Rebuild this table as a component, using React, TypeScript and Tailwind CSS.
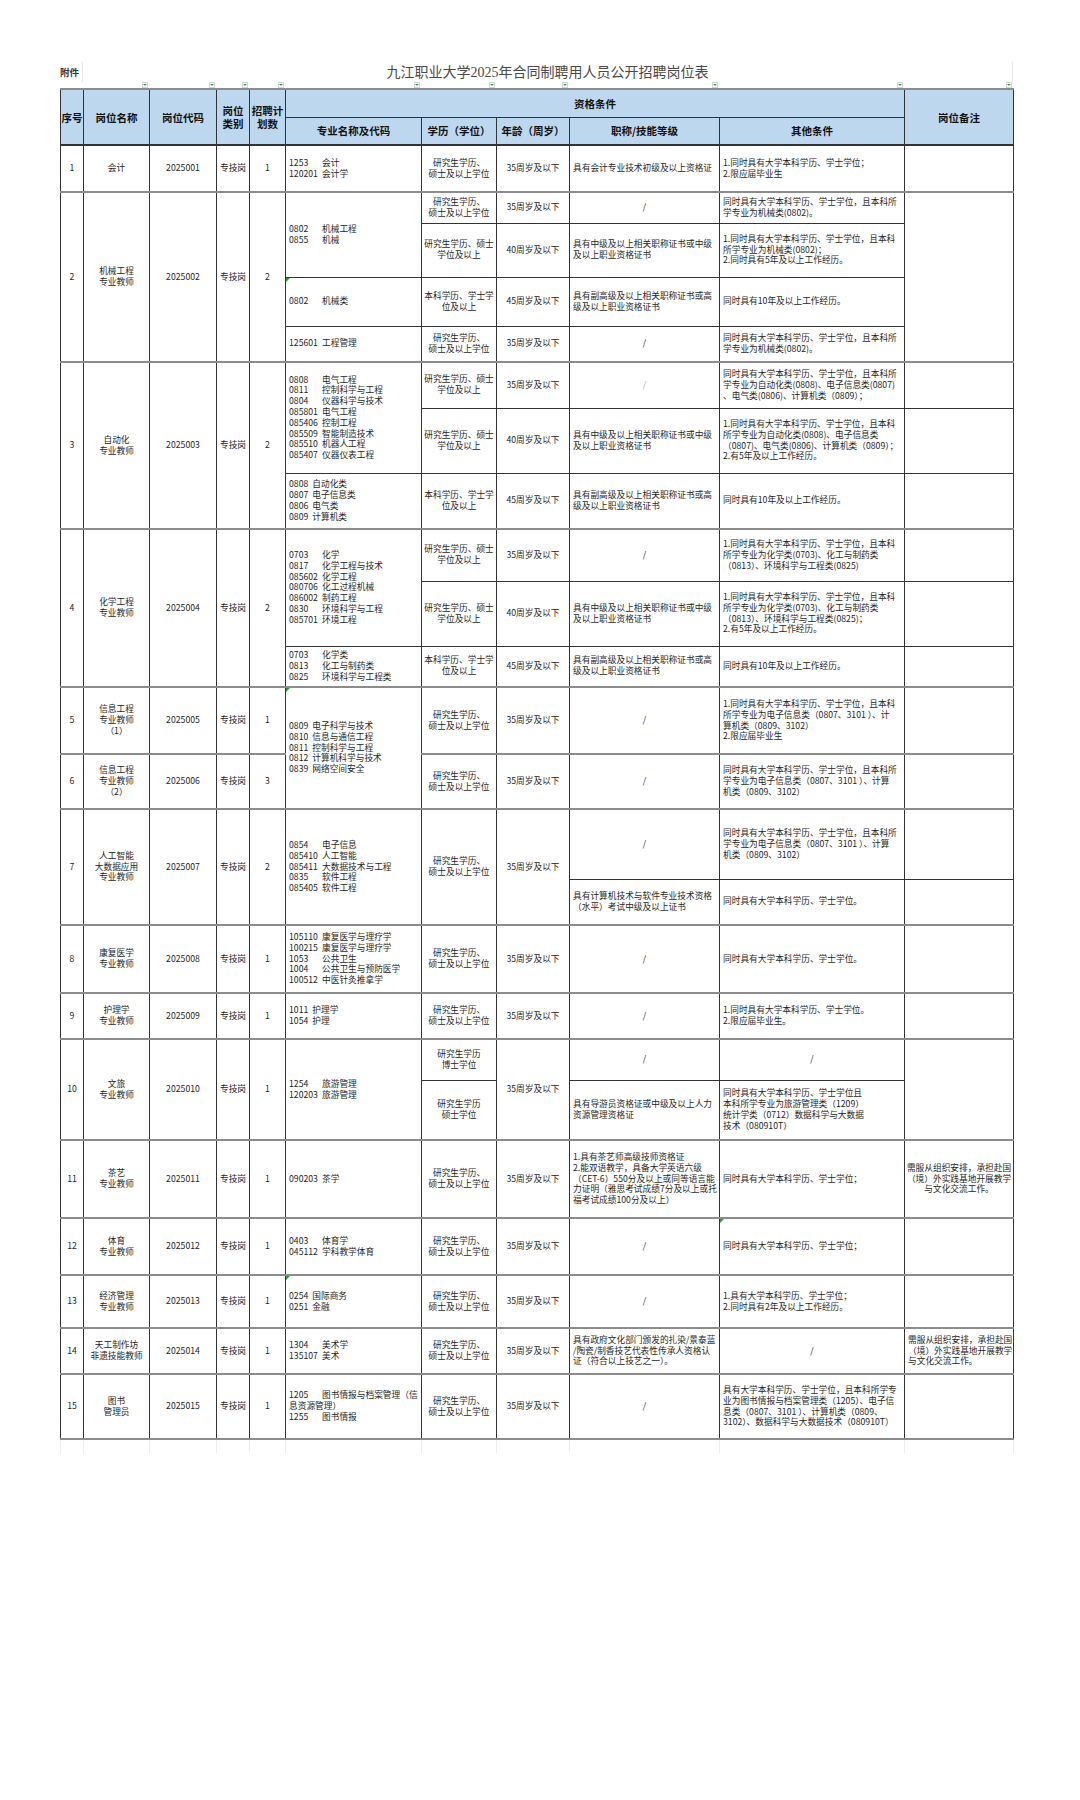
import clsx from "clsx";
import type { ReactNode } from "react";

const COLS = [23, 66, 67, 33, 36, 136, 75, 73, 150, 185, 109];

const EDU_A = ["研究生学历、", "硕士及以上学位"];
const EDU_B = ["研究生学历、硕士", "学位及以上"];
const EDU_C = ["本科学历、学士学", "位及以上"];
const MID = ["具有中级及以上相关职称证书或中级", "及以上职业资格证书"];
const HIGH = ["具有副高级及以上相关职称证书或高", "级及以上职业资格证书"];
const TEN = ["同时具有10年及以上工作经历。"];
const MECH = ["同时具有大学本科学历、学士学位，且本科所", "学专业为机械类(0802)。"];
const INFO = [
  "同时具有大学本科学历、学士学位，且本科所",
  "学专业为电子信息类（0807、3101 ）、计算",
  "机类（0809、3102）",
];
const ABROAD = ["需服从组织安排，承担赴国", "（境）外实践基地开展教学", "与文化交流工作。"];

const rowTop = "border-t-2 border-t-[#8c8c8c]";

function Lines({ lines }: { lines: string[] }) {
  return (
    <>
      {lines.map((l, i) => (
        <div key={i} className="whitespace-nowrap">
          {l}
        </div>
      ))}
    </>
  );
}

function Major({ items, aligned }: { items: [string, string][]; aligned?: boolean }) {
  return (
    <div className="text-left">
      {items.map(([code, name], i) => (
        <div key={i} className="flex whitespace-nowrap">
          {code && <span className={aligned ? "w-[33px] shrink-0" : "mr-[4px]"}>{code}</span>}
          <span>{name}</span>
        </div>
      ))}
    </div>
  );
}

function Tick() {
  return (
    <span className="absolute left-0 top-0 h-0 w-0 border-r-[4px] border-t-[4px] border-r-transparent border-t-[#2f9a3a]" />
  );
}

function Td({
  children,
  rowSpan,
  left,
  tick,
  className,
}: {
  children?: ReactNode;
  rowSpan?: number;
  left?: boolean;
  tick?: boolean;
  className?: string;
}) {
  return (
    <td
      rowSpan={rowSpan}
      className={clsx(
        "relative whitespace-nowrap border border-[#333] py-0 align-middle",
        left ? "px-[3px] text-left" : "px-0 text-center",
        className
      )}
    >
      {tick && <Tick />}
      {children}
    </td>
  );
}

function Th({ children, rowSpan, colSpan }: { children: ReactNode; rowSpan?: number; colSpan?: number }) {
  return (
    <th
      rowSpan={rowSpan}
      colSpan={colSpan}
      className="whitespace-nowrap border border-[#333] px-0 text-center align-middle text-[10.5px] font-bold leading-[13px] text-[#111]"
    >
      {children}
    </th>
  );
}

function Marker() {
  return (
    <div className="flex h-[6px] w-[6px] items-center justify-center border border-[#d4d4d4] bg-white">
      <div className="h-0 w-0 border-x-[2px] border-t-[2px] border-x-transparent border-t-[#3f9f5f]" />
    </div>
  );
}

function Head({ no, name, code, plan, span }: { no: string; name: string[]; code: string; plan: string; span?: number }) {
  return (
    <>
      <Td rowSpan={span}>{no}</Td>
      <Td rowSpan={span}>
        <Lines lines={name} />
      </Td>
      <Td rowSpan={span}>{code}</Td>
      <Td rowSpan={span}>专技岗</Td>
      <Td rowSpan={span}>{plan}</Td>
    </>
  );
}

export default function App() {
  return (
    <div className="min-h-[1800px] w-[1080px] bg-white pl-[60px] pt-[62px] font-['Noto_Sans_CJK_SC',sans-serif] text-[#1f1f1f]">
      <div className="flex h-[20px] w-[953px]">
        <div className="flex w-[23px] items-center border-r border-[#e6e6e6] text-[9.5px] font-bold text-[#333]">
          附件
        </div>
        <div className="flex flex-1 items-center justify-center border-r border-[#e6e6e6] font-['Liberation_Serif','Noto_Sans_CJK_SC',serif] text-[14px] text-[#4a4a4a]">
          九江职业大学2025年合同制聘用人员公开招聘岗位表
        </div>
      </div>
      <table className="w-[953px] table-fixed border-collapse text-[8.7px] leading-[10.8px]">
        <colgroup>
          {COLS.map((w, i) => (
            <col key={i} style={{ width: w }} />
          ))}
        </colgroup>
        <tbody>
          <tr className="h-[6px]">
            {COLS.map((_, i) => (
              <td key={i} className="p-0 align-bottom">
                {i > 0 && (
                  <div className="flex justify-end pr-[2px]">
                    <Marker />
                  </div>
                )}
              </td>
            ))}
          </tr>
          <tr className={clsx("h-[28px] bg-[#bdd7ee]", rowTop)}>
            <Th rowSpan={2}>序号</Th>
            <Th rowSpan={2}>岗位名称</Th>
            <Th rowSpan={2}>岗位代码</Th>
            <Th rowSpan={2}>
              岗位
              <br />
              类别
            </Th>
            <Th rowSpan={2}>
              招聘计
              <br />
              划数
            </Th>
            <Th colSpan={5}>资格条件</Th>
            <Th rowSpan={2}>岗位备注</Th>
          </tr>
          <tr className="h-[28px] border-b-2 border-b-[#333] bg-[#bdd7ee]">
            <Th>专业名称及代码</Th>
            <Th>学历（学位）</Th>
            <Th>年龄（周岁）</Th>
            <Th>职称/技能等级</Th>
            <Th>其他条件</Th>
          </tr>

          {/* 1 */}
          <tr className="h-[47px]">
            <Head no="1" name={["会计"]} code="2025001" plan="1" />
            <Td left>
              <Major aligned items={[["1253", "会计"], ["120201", "会计学"]]} />
            </Td>
            <Td><Lines lines={EDU_A} /></Td>
            <Td>35周岁及以下</Td>
            <Td left><Lines lines={["具有会计专业技术初级及以上资格证"]} /></Td>
            <Td left><Lines lines={["1.同时具有大学本科学历、学士学位；", "2.限应届毕业生"]} /></Td>
            <Td />
          </tr>

          {/* 2 */}
          <tr className={clsx("h-[31px]", rowTop)}>
            <Head no="2" name={["机械工程", "专业教师"]} code="2025002" plan="2" span={4} />
            <Td left rowSpan={2}>
              <Major aligned items={[["0802", "机械工程"], ["0855", "机械"]]} />
            </Td>
            <Td><Lines lines={EDU_A} /></Td>
            <Td>35周岁及以下</Td>
            <Td>/</Td>
            <Td left><Lines lines={MECH} /></Td>
            <Td rowSpan={4} />
          </tr>
          <tr className="h-[54px]">
            <Td><Lines lines={EDU_B} /></Td>
            <Td>40周岁及以下</Td>
            <Td left><Lines lines={MID} /></Td>
            <Td left>
              <Lines lines={["1.同时具有大学本科学历、学士学位，且本科", "所学专业为机械类(0802)；", "2.同时具有5年及以上工作经历。"]} />
            </Td>
          </tr>
          <tr className="h-[49px]">
            <Td left tick>
              <Major aligned items={[["0802", "机械类"]]} />
            </Td>
            <Td><Lines lines={EDU_C} /></Td>
            <Td>45周岁及以下</Td>
            <Td left><Lines lines={HIGH} /></Td>
            <Td left><Lines lines={TEN} /></Td>
          </tr>
          <tr className="h-[36px]">
            <Td left>
              <Major aligned items={[["125601", "工程管理"]]} />
            </Td>
            <Td><Lines lines={EDU_A} /></Td>
            <Td>35周岁及以下</Td>
            <Td>/</Td>
            <Td left><Lines lines={MECH} /></Td>
          </tr>

          {/* 3 */}
          <tr className={clsx("h-[46px]", rowTop)}>
            <Head no="3" name={["自动化", "专业教师"]} code="2025003" plan="2" span={3} />
            <Td left rowSpan={2}>
              <Major
                aligned
                items={[
                  ["0808", "电气工程"],
                  ["0811", "控制科学与工程"],
                  ["0804", "仪器科学与技术"],
                  ["085801", "电气工程"],
                  ["085406", "控制工程"],
                  ["085509", "智能制造技术"],
                  ["085510", "机器人工程"],
                  ["085407", "仪器仪表工程"],
                ]}
              />
            </Td>
            <Td><Lines lines={EDU_B} /></Td>
            <Td>35周岁及以下</Td>
            <Td className="text-[#aaa]">/</Td>
            <Td left>
              <Lines
                lines={[
                  "同时具有大学本科学历、学士学位，且本科所",
                  "学专业为自动化类(0808)、电子信息类(0807)",
                  "、电气类(0806)、计算机类（0809）；",
                ]}
              />
            </Td>
            <Td />
          </tr>
          <tr className="h-[65px]">
            <Td><Lines lines={EDU_B} /></Td>
            <Td>40周岁及以下</Td>
            <Td left><Lines lines={MID} /></Td>
            <Td left>
              <Lines
                lines={[
                  "1.同时具有大学本科学历、学士学位，且本科",
                  "所学专业为自动化类(0808)、电子信息类",
                  "（0807)、电气类(0806)、计算机类（0809）；",
                  "2.有5年及以上工作经历。",
                ]}
              />
            </Td>
            <Td />
          </tr>
          <tr className="h-[56px]">
            <Td left>
              <Major
                items={[
                  ["0808", "自动化类"],
                  ["0807", "电子信息类"],
                  ["0806", "电气类"],
                  ["0809", "计算机类"],
                ]}
              />
            </Td>
            <Td><Lines lines={EDU_C} /></Td>
            <Td>45周岁及以下</Td>
            <Td left><Lines lines={HIGH} /></Td>
            <Td left><Lines lines={TEN} /></Td>
            <Td />
          </tr>

          {/* 4 */}
          <tr className={clsx("h-[52px]", rowTop)}>
            <Head no="4" name={["化学工程", "专业教师"]} code="2025004" plan="2" span={3} />
            <Td left rowSpan={2}>
              <Major
                aligned
                items={[
                  ["0703", "化学"],
                  ["0817", "化学工程与技术"],
                  ["085602", "化学工程"],
                  ["080706", "化工过程机械"],
                  ["086002", "制药工程"],
                  ["0830", "环境科学与工程"],
                  ["085701", "环境工程"],
                ]}
              />
            </Td>
            <Td><Lines lines={EDU_B} /></Td>
            <Td>35周岁及以下</Td>
            <Td>/</Td>
            <Td left>
              <Lines
                lines={[
                  "1.同时具有大学本科学历、学士学位，且本科",
                  "所学专业为化学类(0703)、化工与制药类",
                  "（0813）、环境科学与工程类(0825)",
                ]}
              />
            </Td>
            <Td />
          </tr>
          <tr className="h-[65px]">
            <Td><Lines lines={EDU_B} /></Td>
            <Td>40周岁及以下</Td>
            <Td left><Lines lines={MID} /></Td>
            <Td left>
              <Lines
                lines={[
                  "1.同时具有大学本科学历、学士学位，且本科",
                  "所学专业为化学类(0703)、化工与制药类",
                  "（0813）、环境科学与工程类(0825)；",
                  "2.有5年及以上工作经历。",
                ]}
              />
            </Td>
            <Td />
          </tr>
          <tr className="h-[41px]">
            <Td left>
              <Major
                aligned
                items={[
                  ["0703", "化学类"],
                  ["0813", "化工与制药类"],
                  ["0825", "环境科学与工程类"],
                ]}
              />
            </Td>
            <Td><Lines lines={EDU_C} /></Td>
            <Td>45周岁及以下</Td>
            <Td left><Lines lines={HIGH} /></Td>
            <Td left><Lines lines={TEN} /></Td>
            <Td />
          </tr>

          {/* 5 */}
          <tr className={clsx("h-[67px]", rowTop)}>
            <Head no="5" name={["信息工程", "专业教师", "（1）"]} code="2025005" plan="1" />
            <Td left rowSpan={2} tick>
              <Major
                items={[
                  ["0809", "电子科学与技术"],
                  ["0810", "信息与通信工程"],
                  ["0811", "控制科学与工程"],
                  ["0812", "计算机科学与技术"],
                  ["0839", "网络空间安全"],
                ]}
              />
            </Td>
            <Td><Lines lines={EDU_A} /></Td>
            <Td>35周岁及以下</Td>
            <Td>/</Td>
            <Td left>
              <Lines
                lines={[
                  "1.同时具有大学本科学历、学士学位，且本科",
                  "所学专业为电子信息类（0807、3101 ）、计",
                  "算机类（0809、3102）",
                  "2.限应届毕业生",
                ]}
              />
            </Td>
            <Td />
          </tr>

          {/* 6 */}
          <tr className={clsx("h-[55px]", rowTop)}>
            <Head no="6" name={["信息工程", "专业教师", "（2）"]} code="2025006" plan="3" />
            <Td><Lines lines={EDU_A} /></Td>
            <Td>35周岁及以下</Td>
            <Td>/</Td>
            <Td left><Lines lines={INFO} /></Td>
            <Td />
          </tr>

          {/* 7 */}
          <tr className={clsx("h-[70px]", rowTop)}>
            <Head no="7" name={["人工智能", "大数据应用", "专业教师"]} code="2025007" plan="2" span={2} />
            <Td left rowSpan={2}>
              <Major
                aligned
                items={[
                  ["0854", "电子信息"],
                  ["085410", "人工智能"],
                  ["085411", "大数据技术与工程"],
                  ["0835", "软件工程"],
                  ["085405", "软件工程"],
                ]}
              />
            </Td>
            <Td rowSpan={2}><Lines lines={EDU_A} /></Td>
            <Td rowSpan={2}>35周岁及以下</Td>
            <Td>/</Td>
            <Td left><Lines lines={INFO} /></Td>
            <Td />
          </tr>
          <tr className="h-[46px]">
            <Td left><Lines lines={["具有计算机技术与软件专业技术资格", "（水平）考试中级及以上证书"]} /></Td>
            <Td left><Lines lines={["同时具有大学本科学历、学士学位。"]} /></Td>
            <Td />
          </tr>

          {/* 8 */}
          <tr className={clsx("h-[68px]", rowTop)}>
            <Head no="8" name={["康复医学", "专业教师"]} code="2025008" plan="1" />
            <Td left>
              <Major
                aligned
                items={[
                  ["105110", "康复医学与理疗学"],
                  ["100215", "康复医学与理疗学"],
                  ["1053", "公共卫生"],
                  ["1004", "公共卫生与预防医学"],
                  ["100512", "中医针灸推拿学"],
                ]}
              />
            </Td>
            <Td><Lines lines={EDU_A} /></Td>
            <Td>35周岁及以下</Td>
            <Td>/</Td>
            <Td left><Lines lines={["同时具有大学本科学历、学士学位。"]} /></Td>
            <Td />
          </tr>

          {/* 9 */}
          <tr className={clsx("h-[46px]", rowTop)}>
            <Head no="9" name={["护理学", "专业教师"]} code="2025009" plan="1" />
            <Td left>
              <Major items={[["1011", "护理学"], ["1054", "护理"]]} />
            </Td>
            <Td><Lines lines={EDU_A} /></Td>
            <Td>35周岁及以下</Td>
            <Td>/</Td>
            <Td left><Lines lines={["1.同时具有大学本科学历、学士学位。", "2.限应届毕业生。"]} /></Td>
            <Td />
          </tr>

          {/* 10 */}
          <tr className={clsx("h-[41px]", rowTop)}>
            <Head no="10" name={["文旅", "专业教师"]} code="2025010" plan="1" span={2} />
            <Td left rowSpan={2}>
              <Major aligned items={[["1254", "旅游管理"], ["120203", "旅游管理"]]} />
            </Td>
            <Td><Lines lines={["研究生学历", "博士学位"]} /></Td>
            <Td rowSpan={2}>35周岁及以下</Td>
            <Td>/</Td>
            <Td>/</Td>
            <Td rowSpan={2} />
          </tr>
          <tr className="h-[60px]">
            <Td><Lines lines={["研究生学历", "硕士学位"]} /></Td>
            <Td left><Lines lines={["具有导游员资格证或中级及以上人力", "资源管理资格证"]} /></Td>
            <Td left>
              <Lines
                lines={[
                  "同时具有大学本科学历、学士学位且",
                  "本科所学专业为旅游管理类（1209）",
                  "统计学类（0712）数据科学与大数据",
                  "技术（080910T）",
                ]}
              />
            </Td>
          </tr>

          {/* 11 */}
          <tr className={clsx("h-[78px]", rowTop)}>
            <Head no="11" name={["茶艺", "专业教师"]} code="2025011" plan="1" />
            <Td left>
              <Major aligned items={[["090203", "茶学"]]} />
            </Td>
            <Td><Lines lines={EDU_A} /></Td>
            <Td>35周岁及以下</Td>
            <Td left>
              <Lines
                lines={[
                  "1.具有茶艺师高级技师资格证",
                  "2.能双语教学，具备大学英语六级",
                  "（CET-6）550分及以上或同等语言能",
                  "力证明（雅思考试成绩7分及以上或托",
                  "福考试成绩100分及以上）",
                ]}
              />
            </Td>
            <Td left><Lines lines={["同时具有大学本科学历、学士学位；"]} /></Td>
            <Td className="px-[1px]"><Lines lines={ABROAD} /></Td>
          </tr>

          {/* 12 */}
          <tr className={clsx("h-[57px]", rowTop)}>
            <Head no="12" name={["体育", "专业教师"]} code="2025012" plan="1" />
            <Td left>
              <Major aligned items={[["0403", "体育学"], ["045112", "学科教学体育"]]} />
            </Td>
            <Td><Lines lines={EDU_A} /></Td>
            <Td>35周岁及以下</Td>
            <Td>/</Td>
            <Td left tick><Lines lines={["同时具有大学本科学历、学士学位；"]} /></Td>
            <Td />
          </tr>

          {/* 13 */}
          <tr className={clsx("h-[53px]", rowTop)}>
            <Head no="13" name={["经济管理", "专业教师"]} code="2025013" plan="1" />
            <Td left tick>
              <Major items={[["0254", "国际商务"], ["0251", "金融"]]} />
            </Td>
            <Td><Lines lines={EDU_A} /></Td>
            <Td>35周岁及以下</Td>
            <Td>/</Td>
            <Td left><Lines lines={["1.具有大学本科学历、学士学位；", "2.同时具有2年及以上工作经历。"]} /></Td>
            <Td />
          </tr>

          {/* 14 */}
          <tr className={clsx("h-[46px]", rowTop)}>
            <Head no="14" name={["天工制作坊", "非遗技能教师"]} code="2025014" plan="1" />
            <Td left>
              <Major aligned items={[["1304", "美术学"], ["135107", "美术"]]} />
            </Td>
            <Td><Lines lines={EDU_A} /></Td>
            <Td>35周岁及以下</Td>
            <Td left>
              <Lines
                lines={[
                  "具有政府文化部门颁发的扎染/景泰蓝",
                  "/陶瓷/制香技艺代表性传承人资格认",
                  "证（符合以上技艺之一）。",
                ]}
              />
            </Td>
            <Td>/</Td>
            <Td left className="px-[1px]"><Lines lines={ABROAD} /></Td>
          </tr>

          {/* 15 */}
          <tr className={clsx("h-[65px] border-b-2 border-b-[#8c8c8c]", rowTop)}>
            <Head no="15" name={["图书", "管理员"]} code="2025015" plan="1" />
            <Td left>
              <Major
                aligned
                items={[
                  ["1205", "图书情报与档案管理（信"],
                  ["", "息资源管理）"],
                  ["1255", "图书情报"],
                ]}
              />
            </Td>
            <Td><Lines lines={EDU_A} /></Td>
            <Td>35周岁及以下</Td>
            <Td>/</Td>
            <Td left>
              <Lines
                lines={[
                  "具有大学本科学历、学士学位，且本科所学专",
                  "业为图书情报与档案管理类（1205）、电子信",
                  "息类（0807、3101 ）、计算机类（0809、",
                  "3102）、数据科学与大数据技术（080910T）",
                ]}
              />
            </Td>
            <Td />
          </tr>

          <tr className="h-[14px]">
            {COLS.map((_, i) => (
              <td key={i} className="border-x border-[#ececec] p-0" />
            ))}
          </tr>
        </tbody>
      </table>
    </div>
  );
}
